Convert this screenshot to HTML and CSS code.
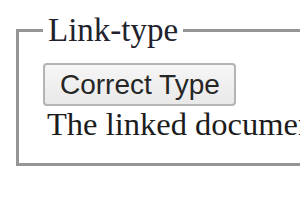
FILE: index.html
```html
<!DOCTYPE html>
<html>
	<head>
		<title>Link-type</title>
		<link rel="stylesheet" href="styles.css">
	</head>
	<body>
		<fieldset class="testBox">
			<legend class="testTitle">Link-type</legend>
			<div class="buttonRow">
				<button type="button" class="checkButton">Correct Type</button>
			</div>
			<p class="result">The linked document is of the correct type.</p>
		</fieldset>
	</body>
</html>
```

FILE: styles.css
```css
html, body{
	margin:0;
	padding:0;
	overflow:hidden;
	background:#ffffff;
}
.testBox{
	margin: 12px 0 0 16px;
	width: 420px;
	border: 3px solid #959595;
	padding: 14px 24px 20px 24px;
	font-family: "Liberation Serif", "Times New Roman", serif;
	color: #1c1c1c;
}
.testTitle{
	font-size: 33px;
	line-height: 37px;
	padding: 0 5px;
	color: #22222c;
}
.buttonRow{
	display: flex;
}
.checkButton{
	font-family: "Liberation Sans", Arial, sans-serif;
	font-size: 28px;
	line-height: 31px;
	padding: 4px 14px 4px 15px;
	border: 2px solid #b4b4b4;
	border-radius: 4px;
	background: linear-gradient(#f6f6f6, #e9e9e9);
	color: #262626;
}
.result{
	margin: 0;
	padding-left: 4px;
	font-size: 32.5px;
	line-height: 37px;
	white-space: nowrap;
}
```
